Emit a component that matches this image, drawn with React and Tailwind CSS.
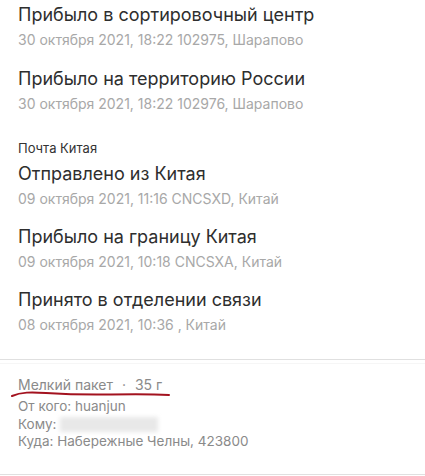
const events = [
  { title: 'Прибыло в сортировочный центр', sub: '30 октября 2021, 18:22 102975, Шарапово' },
  { title: 'Прибыло на территорию России', sub: '30 октября 2021, 18:22 102976, Шарапово' },
]

const chinaEvents = [
  { title: 'Отправлено из Китая', sub: '09 октября 2021, 11:16 CNCSXD, Китай' },
  { title: 'Прибыло на границу Китая', sub: '09 октября 2021, 10:18 CNCSXA, Китай' },
  { title: 'Принято в отделении связи', sub: '08 октября 2021, 10:36 , Китай' },
]

function Event({ title, sub }) {
  return (
    <div>
      <div className="text-[18px] leading-[24px] text-[#2e2e2e]">{title}</div>
      <div className="mt-[3px] text-[14px] leading-[20px] text-[#a8a8a8]">{sub}</div>
    </div>
  )
}

export default function App() {
  return (
    <div className="w-[425px] h-[476px] overflow-hidden bg-white font-['Inter',sans-serif]">
      {/* tracking list */}
      <div className="px-[18px] pt-[3px] flex flex-col gap-[17px]">
        {events.map((e) => (
          <Event key={e.sub} {...e} />
        ))}
      </div>

      <div className="px-[18px] mt-[25px]">
        <div className="text-[13px] leading-[18px] text-[#333]">Почта Китая</div>
        <div className="mt-[5px] flex flex-col gap-[16px]">
          {chinaEvents.map((e) => (
            <Event key={e.sub} {...e} />
          ))}
        </div>
      </div>

      {/* parcel info */}
      <div className="mt-[24px] border-t border-b border-[#e0e0e0] h-[116px]">
        <div className="h-[4px] border-b border-[#f6f6f6]" />
        <div className="px-[18px] pt-[12px]">
          <div className="relative w-fit text-[14px] leading-[18px] text-[#8a8a8a]">
            Мелкий пакет <span className="mx-[5px]">·</span> 35 г
            <svg
              className="absolute left-[-7px] top-[13px]"
              width="160"
              height="10"
              viewBox="0 0 160 10"
              fill="none"
            >
              <path
                d="M1 7 C 10 3, 20 3, 35 4 S 70 6, 100 5.5 S 140 5, 158 6"
                stroke="#a3121f"
                strokeWidth="2"
                strokeLinecap="round"
              />
            </svg>
          </div>
          <div className="mt-[4px] text-[13.5px] leading-[17.5px] text-[#8a8a8a]">
            <div>От кого: huanjun</div>
            <div className="flex items-center">
              Кому:
              <span className="ml-[3px] inline-block w-[98px] h-[15px] bg-[#e8e8e8] blur-[2px]" />
            </div>
            <div>Куда: Набережные Челны, 423800</div>
          </div>
        </div>
      </div>
    </div>
  )
}
